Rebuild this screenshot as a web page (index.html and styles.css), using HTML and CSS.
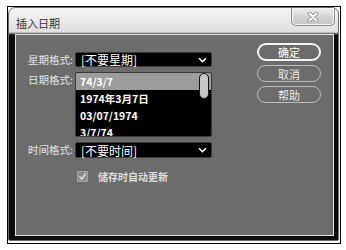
FILE: index.html
```html
<!DOCTYPE html>
<html lang="zh-CN">
<head>
    <meta charset="UTF-8">
    <meta name="viewport" content="width=device-width, initial-scale=1.0">
    <title>插入日期</title>
    <link rel="stylesheet" href="styles.css">
</head>
<body>
    <div class="frame">
        <div class="window">
            <div class="titlebar">
                <span class="title">插入日期</span>
                <button class="close" type="button">
                    <svg width="14" height="10" viewBox="0 0 14 10">
                        <path d="M3.5 1.5 L10.5 8.5 M10.5 1.5 L3.5 8.5" stroke="#9a9a9a" stroke-width="4" stroke-linecap="round"/>
                        <path d="M3.5 1.5 L10.5 8.5 M10.5 1.5 L3.5 8.5" stroke="#fafafa" stroke-width="2" stroke-linecap="round"/>
                    </svg>
                </button>
            </div>
            <div class="panel">
                <div class="form">
                    <div class="row">
                        <label class="lbl">星期格式:</label>
                        <div class="select">
                            <span>[不要星期]</span>
                            <svg class="chev" width="9" height="6" viewBox="0 0 9 6"><path d="M1 1.2 L4.5 4.6 L8 1.2" fill="none" stroke="#fff" stroke-width="1.5"/></svg>
                        </div>
                    </div>
                    <div class="row">
                        <label class="lbl">日期格式:</label>
                        <div class="listbox">
                            <div class="item selected">74/3/7</div>
                            <div class="item">1974年3月7日</div>
                            <div class="item">03/07/1974</div>
                            <div class="item">3/7/74</div>
                            <div class="thumb"></div>
                        </div>
                    </div>
                    <div class="row">
                        <label class="lbl">时间格式:</label>
                        <div class="select">
                            <span>[不要时间]</span>
                            <svg class="chev" width="9" height="6" viewBox="0 0 9 6"><path d="M1 1.2 L4.5 4.6 L8 1.2" fill="none" stroke="#fff" stroke-width="1.5"/></svg>
                        </div>
                    </div>
                    <div class="check-row">
                        <span class="checkbox">
                            <svg width="9" height="9" viewBox="0 0 9 9"><path d="M1.5 4.5 L3.8 7 L7.8 1.5" fill="none" stroke="#dcdcdc" stroke-width="1.6"/></svg>
                        </span>
                        <span class="check-text">储存时自动更新</span>
                    </div>
                </div>
                <div class="buttons">
                    <button type="button" class="btn default">确定</button>
                    <button type="button" class="btn">取消</button>
                    <button type="button" class="btn">帮助</button>
                </div>
            </div>
        </div>
    </div>
</body>
</html>
```

FILE: styles.css
```css
body {
    margin: 0;
    background-color: #fff;
    font-family: "Noto Sans CJK SC", "Noto Sans", sans-serif;
}
.frame {
    box-sizing: border-box;
    margin: 6px 0 0 7px;
    width: 334px;
    height: 238px;
    border: 1px solid #000;
    padding: 0 1px 2px 0;
    display: flex;
}
.window {
    flex: 1;
    display: flex;
    flex-direction: column;
    border: 1px solid #6a6a6a;
    border-radius: 7px 7px 2px 2px;
    padding: 0 4px 4px 6px;
    background: linear-gradient(to bottom, #f6f6f6 0, #dedede 24px, #0c0c0c 27px);
}
.titlebar {
    height: 26px;
    display: flex;
    align-items: flex-start;
    justify-content: space-between;
}
.title {
    margin: 8px 0 0 1px;
    font-size: 11px;
    line-height: 14px;
    color: #333;
}
.close {
    margin: 0 -1px 0 0;
    width: 44px;
    height: 18px;
    padding: 0;
    border: 1px solid #8c8c8c;
    border-top: none;
    border-radius: 0 0 5px 5px;
    background: linear-gradient(to bottom, #f0f0f0, #d6d6d6 50%, #c4c4c4);
    box-shadow: inset 0 0 0 1px #f4f4f4;
    display: flex;
    align-items: center;
    justify-content: center;
}
.panel {
    flex: 1;
    display: flex;
    align-items: flex-start;
    border: 1px solid #e2e2e2;
    background-color: #6c6c6c;
}
.form {
    display: flex;
    flex-direction: column;
    padding-top: 17px;
}
.row {
    display: flex;
    align-items: flex-start;
    margin-bottom: 5px;
}
.lbl {
    width: 57px;
    padding-right: 2px;
    text-align: right;
    font-size: 10.5px;
    line-height: 15px;
    color: #e4e4e4;
}
.select {
    box-sizing: border-box;
    width: 137px;
    height: 15px;
    background-color: #000;
    border: 1px solid #3a3a3a;
    border-radius: 2px;
    display: flex;
    align-items: center;
    justify-content: space-between;
    padding: 0 4px 0 5px;
    color: #fff;
    font-size: 12px;
    line-height: 13px;
}
.listbox {
    position: relative;
    box-sizing: border-box;
    width: 137px;
    height: 65px;
    background-color: #000;
    border: 1px solid #3a3a3a;
    border-radius: 2px;
    overflow: hidden;
}
.item {
    height: 17px;
    line-height: 17px;
    padding-left: 4px;
    color: #fff;
    font-size: 10.5px;
    font-weight: bold;
}
.item.selected {
    background-color: #9c9c9c;
}
.thumb {
    position: absolute;
    top: 0;
    right: 2px;
    width: 8px;
    height: 24px;
    background-color: #c6c6c6;
    border: 1px solid #111;
    border-radius: 5px;
}
.row:nth-child(3) .select {
    height: 16px;
}
.check-row {
    display: flex;
    align-items: center;
    margin: 6px 0 0 61px;
}
.checkbox {
    box-sizing: border-box;
    width: 11px;
    height: 11px;
    background-color: #8e8e8e;
    border: 1px solid #a4a4a4;
    display: flex;
    align-items: center;
    justify-content: center;
}
.check-text {
    margin-left: 10px;
    font-size: 10px;
    font-weight: bold;
    color: #dcdcdc;
}
.buttons {
    display: flex;
    flex-direction: column;
    gap: 4px;
    margin: 8px 0 0 45px;
}
.btn {
    box-sizing: border-box;
    width: 64px;
    height: 17px;
    padding: 0;
    border: 1px solid #bcbcbc;
    border-radius: 9px;
    background-color: #6c6c6c;
    color: #e8e8e8;
    font-family: "Noto Sans CJK SC", sans-serif;
    font-size: 11px;
    line-height: 14px;
}
.btn.default {
    height: 18px;
    border: 2px solid #f4f4f4;
    color: #fff;
}
```
